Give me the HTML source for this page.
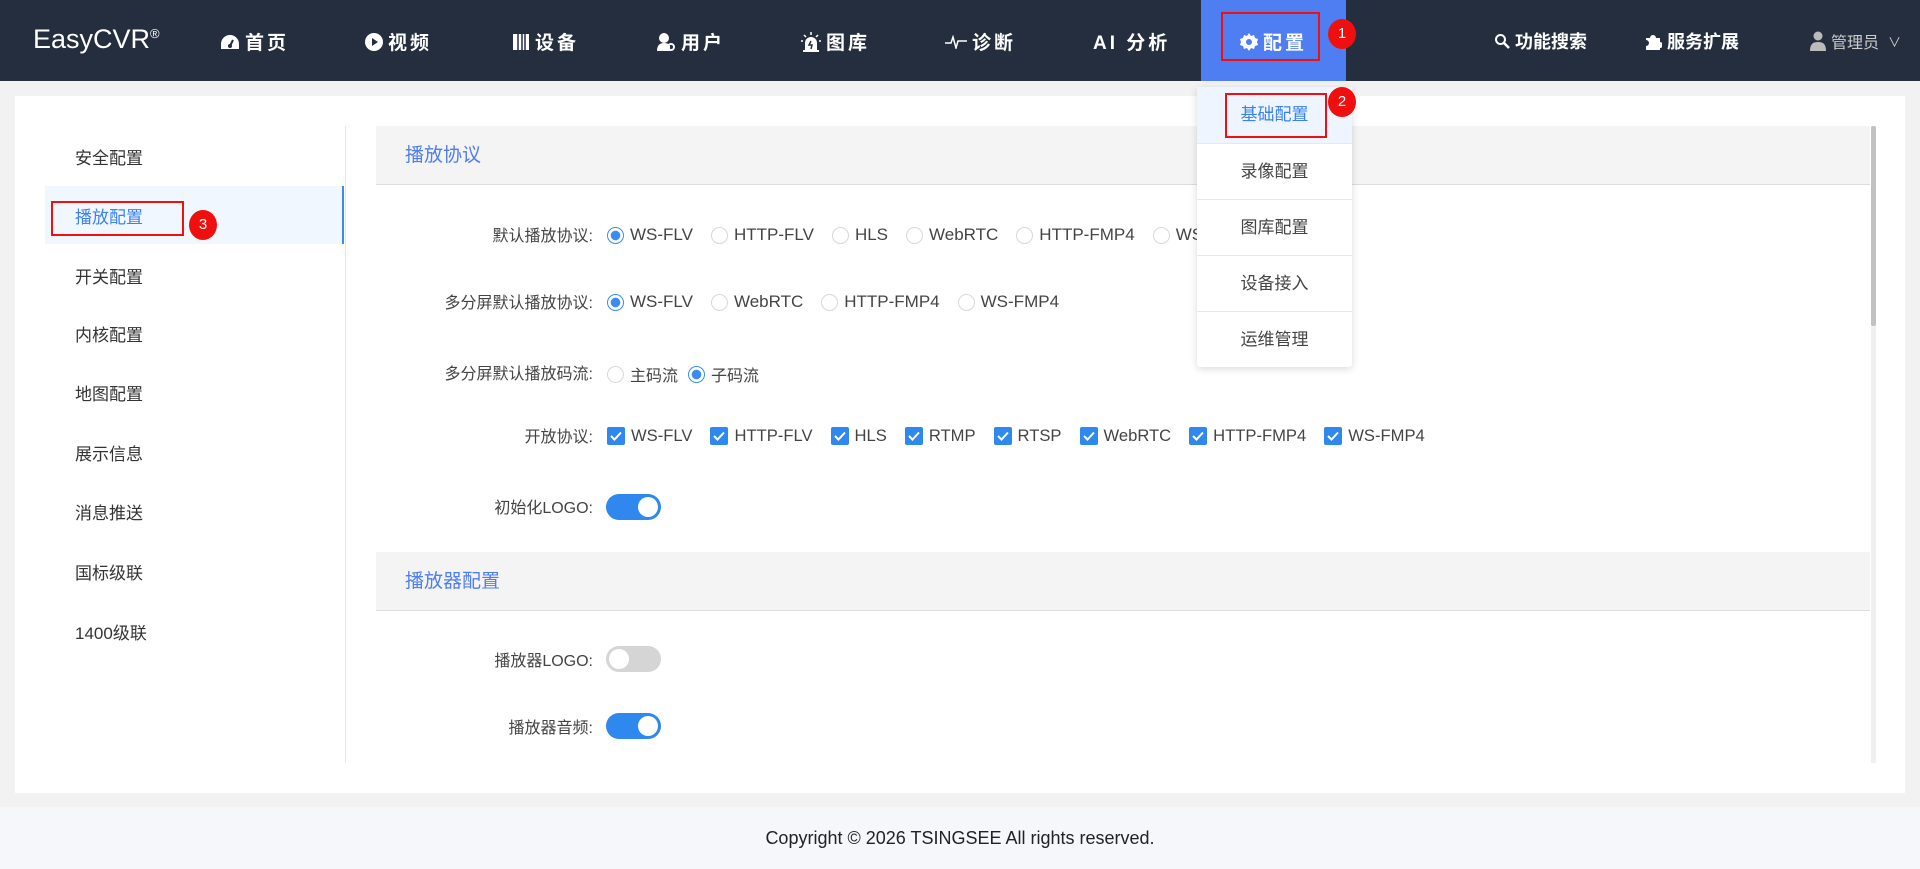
<!DOCTYPE html>
<html><head><meta charset="utf-8"><style>
*{margin:0;padding:0;box-sizing:border-box}
body{width:1920px;height:869px;overflow:hidden;background:#f2f2f2;font-family:"Liberation Sans","Noto Sans CJK SC",sans-serif;position:relative;color:#333}
.hdr{position:absolute;left:0;top:0;width:1920px;height:81px;background:#252e3e}
.logo{position:absolute;left:33px;top:24px;color:#fff;font-size:27px}
.logo sup{font-size:13px;vertical-align:top;position:relative;top:2px}
.nav{position:absolute;top:28px;color:#fff;font-weight:bold;font-size:19px;letter-spacing:3px;display:flex;align-items:center;gap:5px;white-space:nowrap}
.nav svg{flex:none}
.act{position:absolute;left:1201px;top:0;width:145px;height:81px;background:#4f7ef2}
.red{position:absolute;border:2px solid #f01010}
.dot{position:absolute;width:28px;height:30px;border-radius:50%;background:#f00f0f;color:#fff;font-size:15px;text-align:center;line-height:30px}
.panel{position:absolute;left:15px;top:96px;width:1890px;height:697px;background:#fff}
.footer{position:absolute;left:0;top:807px;width:1920px;height:62px;background:#f5f7fb;text-align:center;line-height:62px;font-size:18px;color:#222}
.mi{position:absolute;left:75px;font-size:17px;color:#333}
.sec{position:absolute;left:376px;width:1494px;height:59px;background:#f4f4f4;border-bottom:1px solid #ddd;color:#4f7ef2;font-size:19px;line-height:59px;padding-left:29px}
.lbl{position:absolute;right:1327px;font-size:16px;color:#444;white-space:nowrap}
.opts{position:absolute;left:607px;display:flex;align-items:center;font-size:17px;color:#444;white-space:nowrap}
.r{width:17px;height:17px;border-radius:50%;border:1px solid #d8d8d8;margin-right:6px;display:inline-block;flex:none}
.r.on{border:1.5px solid #3b8cf0;background:radial-gradient(circle,#3b8cf0 0 4.5px,#fff 5px)}
.c{width:18px;height:18px;border-radius:2px;background:#2f88ee;margin-right:6px;flex:none;display:flex;align-items:center;justify-content:center}
.o{display:flex;align-items:center;margin-right:18px}
.tg{position:absolute;left:606px;width:55px;height:26px;border-radius:13px;background:#2f88ee}
.tg::after{content:"";position:absolute;right:3px;top:3px;width:20px;height:20px;border-radius:50%;background:#fff}
.tg.off{background:#d5d5d5}.tg.off::after{left:3px;right:auto}
.dd{position:absolute;left:1197px;top:87px;width:155px;height:280px;background:#fff;box-shadow:0 2px 8px rgba(0,0,0,.15);border-radius:3px}
.di{height:56px;border-bottom:1px solid #e8e8e8;text-align:center;line-height:56px;font-size:17px;color:#444}
</style></head><body>
<div class="hdr">
<div class="logo">EasyCVR<sup>®</sup></div>
<div class="nav" style="left:220px"><svg width="20" height="16" viewBox="0 0 20 16"><path d="M10 1a9 9 0 0 0-9 9v5h18v-5a9 9 0 0 0-9-9z" fill="#fff"/><path d="M10 12l3-6" stroke="#252e3e" stroke-width="2"/><circle cx="10" cy="12" r="2" fill="#252e3e"/></svg>首页</div>
<div class="nav" style="left:365px"><svg width="18" height="18"><circle cx="9" cy="9" r="9" fill="#fff"/><path d="M7 5l6 4-6 4z" fill="#252e3e"/></svg>视频</div>
<div class="nav" style="left:512px"><svg width="18" height="18"><rect x="1" y="1" width="16" height="16" fill="#fff"/><path d="M6 1v16M10 1v16M13 1v16" stroke="#252e3e" stroke-width="1.5"/></svg>设备</div>
<div class="nav" style="left:656px"><svg width="20" height="20"><circle cx="8" cy="6" r="5" fill="#fff"/><path d="M1 19c0-6 3-8 7-8s6 2 6 3v5z" fill="#fff"/><circle cx="15" cy="15" r="3" fill="none" stroke="#fff" stroke-width="2"/></svg>用户</div>
<div class="nav" style="left:801px"><svg width="20" height="20"><path d="M4 19v-8a6 6 0 0 1 12 0v8z" fill="#fff"/><path d="M10 0v3M3 3l2 2M17 3l-2 2M0 9h2M18 9h2" stroke="#fff" stroke-width="1.5"/><path d="M10 9l-2 4h3l-1 4" stroke="#252e3e" stroke-width="1.5" fill="none"/><rect x="2" y="18" width="16" height="2" fill="#fff"/></svg>图库</div>
<div class="nav" style="left:945px"><svg width="22" height="14"><path d="M0 8h6l2-6 3 11 2-7h9" stroke="#fff" stroke-width="1.5" fill="none"/></svg>诊断</div>
<div class="nav" style="left:1093px">AI 分析</div>
<div class="act"></div>
<div class="nav" style="left:1240px"><svg width="18" height="18" viewBox="0 0 18 18"><path d="M9 0l2 3 3-1 1 3 3 1-1 3 1 3-3 1-1 3-3-1-2 3-2-3-3 1-1-3-3-1 1-3-1-3 3-1 1-3 3 1z" fill="#fff"/><circle cx="9" cy="9" r="3" fill="#4f7ef2"/></svg>配置</div>
<div class="red" style="left:1221px;top:12px;width:99px;height:49px"></div>
<div class="dot" style="left:1328px;top:19px">1</div>
<div class="nav" style="left:1494px;font-size:18px;letter-spacing:0"><svg width="16" height="16"><circle cx="6.5" cy="6.5" r="4.5" stroke="#fff" stroke-width="2" fill="none"/><path d="M10 10l5 5" stroke="#fff" stroke-width="2.5"/></svg>功能搜索</div>
<div class="nav" style="left:1644px;font-size:18px;letter-spacing:0"><svg width="18" height="18"><path d="M2 6h4a3 3 0 1 1 6 0h4v4a3 3 0 1 1 0 6v2H2v-4a3 3 0 1 0 0-6z" fill="#fff"/></svg>服务扩展</div>
<div class="nav" style="left:1810px;font-size:16px;font-weight:normal;letter-spacing:0;color:#ccc;top:29px"><svg width="16" height="20"><circle cx="8" cy="5" r="4.5" fill="#bbb"/><path d="M0 20c0-7 3-9 8-9s8 2 8 9z" fill="#bbb"/></svg>管理员 <span style="font-size:13px;margin-left:4px">∨</span></div>
</div>
<div class="panel"></div>
<div style="position:absolute;left:45px;top:186px;width:299px;height:58px;background:#f0f7ff;border-right:2px solid #3b8cf0"></div>
<div style="position:absolute;left:345px;top:126px;width:1px;height:637px;background:#e6e6e6"></div>
<div class="mi" style="top:144px">安全配置</div>
<div class="mi" style="top:203px;color:#3b82f0">播放配置</div>
<div class="mi" style="top:263px">开关配置</div>
<div class="mi" style="top:321px">内核配置</div>
<div class="mi" style="top:380px">地图配置</div>
<div class="mi" style="top:440px">展示信息</div>
<div class="mi" style="top:499px">消息推送</div>
<div class="mi" style="top:559px">国标级联</div>
<div class="mi" style="top:619px">1400级联</div>
<div class="red" style="left:51px;top:201px;width:133px;height:35px"></div>
<div class="dot" style="left:189px;top:210px">3</div>
<div class="sec" style="top:126px">播放协议</div>
<div class="sec" style="top:552px">播放器配置</div>
<div style="position:absolute;left:1871px;top:126px;width:5px;height:637px;background:#f0f0f0"></div>
<div style="position:absolute;left:1871px;top:126px;width:5px;height:200px;background:#c1c1c1;border-radius:2px"></div>
<div class="lbl" style="top:222px">默认播放协议:</div>
<div class="opts" style="top:225px"><span class="o"><i class="r on"></i>WS-FLV</span><span class="o"><i class="r"></i>HTTP-FLV</span><span class="o"><i class="r"></i>HLS</span><span class="o"><i class="r"></i>WebRTC</span><span class="o"><i class="r"></i>HTTP-FMP4</span><span class="o"><i class="r"></i>WS-FMP4</span></div>
<div class="lbl" style="top:289px">多分屏默认播放协议:</div>
<div class="opts" style="top:292px"><span class="o"><i class="r on"></i>WS-FLV</span><span class="o"><i class="r"></i>WebRTC</span><span class="o"><i class="r"></i>HTTP-FMP4</span><span class="o"><i class="r"></i>WS-FMP4</span></div>
<div class="lbl" style="top:360px">多分屏默认播放码流:</div>
<div class="opts" style="top:362px;font-size:16px"><span class="o" style="margin-right:10px"><i class="r"></i>主码流</span><span class="o"><i class="r on"></i>子码流</span></div>
<div class="lbl" style="top:423px">开放协议:</div>
<div class="opts" style="top:426px;font-size:16.6px">
<span class="o"><i class="c"><svg width="12" height="10"><path d="M1 5l3.5 3.5L11 1.5" stroke="#fff" stroke-width="2" fill="none"/></svg></i>WS-FLV</span>
<span class="o"><i class="c"><svg width="12" height="10"><path d="M1 5l3.5 3.5L11 1.5" stroke="#fff" stroke-width="2" fill="none"/></svg></i>HTTP-FLV</span>
<span class="o"><i class="c"><svg width="12" height="10"><path d="M1 5l3.5 3.5L11 1.5" stroke="#fff" stroke-width="2" fill="none"/></svg></i>HLS</span>
<span class="o"><i class="c"><svg width="12" height="10"><path d="M1 5l3.5 3.5L11 1.5" stroke="#fff" stroke-width="2" fill="none"/></svg></i>RTMP</span>
<span class="o"><i class="c"><svg width="12" height="10"><path d="M1 5l3.5 3.5L11 1.5" stroke="#fff" stroke-width="2" fill="none"/></svg></i>RTSP</span>
<span class="o"><i class="c"><svg width="12" height="10"><path d="M1 5l3.5 3.5L11 1.5" stroke="#fff" stroke-width="2" fill="none"/></svg></i>WebRTC</span>
<span class="o"><i class="c"><svg width="12" height="10"><path d="M1 5l3.5 3.5L11 1.5" stroke="#fff" stroke-width="2" fill="none"/></svg></i>HTTP-FMP4</span>
<span class="o"><i class="c"><svg width="12" height="10"><path d="M1 5l3.5 3.5L11 1.5" stroke="#fff" stroke-width="2" fill="none"/></svg></i>WS-FMP4</span>
</div>
<div class="lbl" style="top:494px">初始化LOGO:</div>
<div class="tg" style="top:494px"></div>
<div class="lbl" style="top:647px">播放器LOGO:</div>
<div class="tg off" style="top:646px"></div>
<div class="lbl" style="top:714px">播放器音频:</div>
<div class="tg" style="top:713px"></div>
<div class="dd">
<div class="di" style="background:#eef5fe;color:#3b82f0;height:57px">基础配置</div>
<div class="di">录像配置</div>
<div class="di">图库配置</div>
<div class="di">设备接入</div>
<div class="di" style="border:none">运维管理</div>
</div>
<div class="red" style="left:1225px;top:93px;width:102px;height:45px"></div>
<div class="dot" style="left:1328px;top:87px">2</div>
<div class="footer">Copyright © 2026 TSINGSEE All rights reserved.</div>
</body></html>
